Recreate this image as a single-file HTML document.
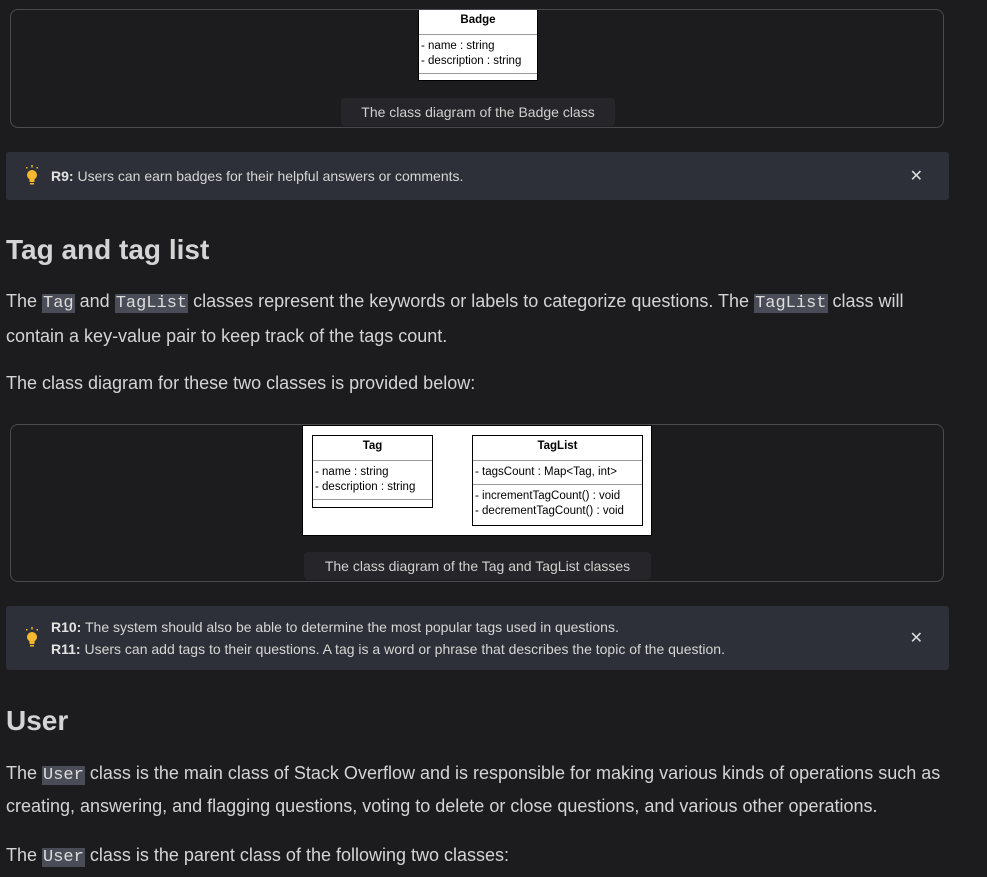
<!DOCTYPE html>
<html><head><style>
body{margin:0;background:#1c1c1e;width:987px;height:877px;overflow:hidden;font-family:"Liberation Sans",sans-serif;color:#d4d4d4;position:relative}
.abs{position:absolute}
.fig{position:absolute;left:10px;width:934px;border:1px solid #4a4a4e;border-radius:8px;box-sizing:border-box}
.cap{position:absolute;background:#26262a;color:#d0d0d0;font-size:14px;text-align:center;border-radius:4px;line-height:28px}
.note{position:absolute;left:6px;width:943px;background:#2d3038;border-radius:3px;font-size:14px;color:#d6d6d6}
.note b{color:#e2e2e2}
.x{position:absolute;right:26px;font-size:16px;color:#ddd}
h2{position:absolute;left:6px;margin:0;font-size:28px;font-weight:bold;color:#d4d4d4}
p{position:absolute;left:6px;margin:0;font-size:18px;line-height:33px;width:940px}
code{font-family:"Liberation Mono",monospace;background:#4a4d57;padding:0 1px;font-size:17px;color:#ddd}
.uml{position:absolute;background:#fff;border:1px solid #000;font-size:11.5px;color:#000;box-sizing:border-box}
.uml .h{text-align:center;font-weight:bold;height:24px;line-height:20px;border-bottom:1px solid #999}
.uml .s{padding:4px 2px;line-height:15px;border-bottom:1px solid #999}
.bulb{position:absolute;left:19px}
</style></head><body>
<div class="fig" style="top:9px;height:119px"></div>
<div class="uml" style="left:418px;top:10px;width:120px;height:71px;border-top:none">
<div class="h">Badge</div><div class="s">- name : string<br>- description : string</div></div>
<div class="cap" style="left:341px;top:98px;width:274px">The class diagram of the Badge class</div>

<div class="note" style="top:152px;height:48px">
<svg class="bulb" style="top:13px" width="14" height="22" viewBox="0 0 14 22"><g fill="#f5b82e"><circle cx="7" cy="10" r="5"/><rect x="4.5" y="13" width="5" height="4"/><rect x="5" y="18" width="4" height="1.5"/><rect x="6.3" y="0" width="1.4" height="2.5"/><rect x="1" y="2" width="1.5" height="1.5"/><rect x="11.5" y="2" width="1.5" height="1.5"/></g></svg>
<div class="abs" style="left:45px;top:16px"><b>R9:</b> Users can earn badges for their helpful answers or comments.</div>
<div class="x" style="top:14px">✕</div></div>

<h2 style="top:234px">Tag and tag list</h2>
<p style="top:285px">The <code>Tag</code> and <code>TagList</code> classes represent the keywords or labels to categorize questions. The <code>TagList</code> class will contain a key-value pair to keep track of the tags count.</p>
<p style="top:367px">The class diagram for these two classes is provided below:</p>

<div class="fig" style="top:424px;height:158px"></div>
<div class="abs" style="left:302px;top:425px;width:350px;height:111px;background:#fff;border:1px solid #000;box-sizing:border-box"></div>
<div class="uml" style="left:312px;top:435px;width:121px;height:73px"><div class="h">Tag</div><div class="s">- name : string<br>- description : string</div></div>
<div class="uml" style="left:472px;top:435px;width:171px;height:91px"><div class="h">TagList</div><div class="s" style="height:19px;line-height:19px;padding:2px 2px">- tagsCount : Map&lt;Tag, int&gt;</div><div class="s" style="border:none">- incrementTagCount() : void<br>- decrementTagCount() : void</div></div>
<div class="cap" style="left:304px;top:552px;width:347px">The class diagram of the Tag and TagList classes</div>

<div class="note" style="top:606px;height:64px">
<svg class="bulb" style="top:21px" width="14" height="22" viewBox="0 0 14 22"><g fill="#f5b82e"><circle cx="7" cy="10" r="5"/><rect x="4.5" y="13" width="5" height="4"/><rect x="5" y="18" width="4" height="1.5"/><rect x="6.3" y="0" width="1.4" height="2.5"/><rect x="1" y="2" width="1.5" height="1.5"/><rect x="11.5" y="2" width="1.5" height="1.5"/></g></svg>
<div class="abs" style="left:45px;top:10px;line-height:22px"><b>R10:</b> The system should also be able to determine the most popular tags used in questions.<br><b>R11:</b> Users can add tags to their questions. A tag is a word or phrase that describes the topic of the question.</div>
<div class="x" style="top:22px">✕</div></div>

<h2 style="top:705px">User</h2>
<p style="top:758px;line-height:31px">The <code>User</code> class is the main class of Stack Overflow and is responsible for making various kinds of operations such as creating, answering, and flagging questions, voting to delete or close questions, and various other operations.</p>
<p style="top:839px">The <code>User</code> class is the parent class of the following two classes:</p>
</body></html>
